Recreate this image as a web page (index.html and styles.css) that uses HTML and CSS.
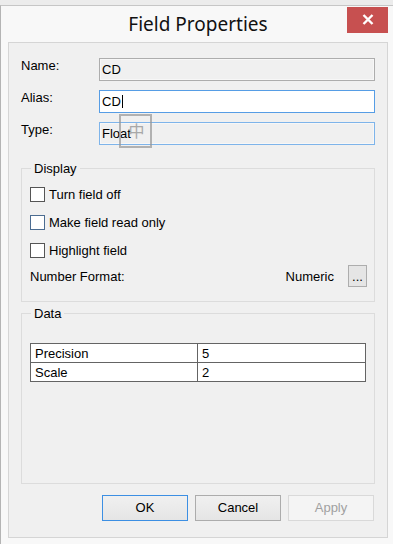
FILE: index.html
```html
<!DOCTYPE html>
<html>
<head>
<meta charset="utf-8">
	<title>Field Properties</title>
	<link rel="stylesheet" href="styles.css">
</head>
<body>
	<div class="window">
		<div class="titlebar">
			<span></span>
			<h1 class="title">Field Properties</h1>
			<div class="close">
				<svg width="12" height="11" viewBox="0 0 12 11"><path d="M1.5 1 L10.5 10 M10.5 1 L1.5 10" stroke="#fff" stroke-width="2.4" fill="none"/></svg>
			</div>
		</div>
		<div class="client">
			<div class="props">
				<span class="prop-label">Name:</span>
				<div class="box box-disabled">CD</div>
				<span class="prop-label">Alias:</span>
				<div class="box box-focus">CD<span class="caret"></span></div>
				<span class="prop-label">Type:</span>
				<div class="box box-hover">Float<span class="ime">中</span></div>
			</div>

			<fieldset class="group display">
				<legend>Display</legend>
				<div class="check"><span class="checkbox"></span>Turn field off</div>
				<div class="check"><span class="checkbox checkbox-hover"></span>Make field read only</div>
				<div class="check"><span class="checkbox"></span>Highlight field</div>
				<div class="format-row">
					<span class="format-label">Number Format:</span>
					<span class="format-value">Numeric</span>
					<span class="more">...</span>
				</div>
			</fieldset>

			<fieldset class="group data">
				<legend>Data</legend>
				<table class="grid">
					<tr><td class="col-name">Precision</td><td>5</td></tr>
					<tr><td class="col-name">Scale</td><td>2</td></tr>
				</table>
			</fieldset>

			<div class="buttons">
				<span class="btn btn-default">OK</span>
				<span class="btn">Cancel</span>
				<span class="btn btn-disabled">Apply</span>
			</div>
		</div>
	</div>
</body>
</html>
```

FILE: styles.css
```css
body{margin: 0;background-color: #ececec;font-family: "Liberation Sans", Arial, sans-serif;font-size: 13px;color: #000;overflow: hidden;}

.window{margin-top: 5px;height: 538px;border-top: 1px solid #c6c6c6;border-left: 1px solid #b4b4b4;background-color: #f8f8f8;}

/* title bar */
.titlebar{display: grid;grid-template-columns: 1fr auto 1fr;height: 36px;}
.title{margin: 0;font-family: "Noto Sans", "Open Sans", sans-serif;font-weight: normal;font-size: 19px;line-height: 36px;color: #111;padding-left: 2px;}
.close{justify-self: end;align-self: start;margin: 1px 5px 0 0;width: 41px;height: 26px;background-color: #c75050;display: flex;align-items: center;justify-content: center;}
.close svg{margin-top: -1px;}

/* client area */
.client{margin: 0 5px 0 7px;height: 496px;box-sizing: border-box;border: 1px solid #d5d5d5;background-color: #f0f0f0;padding: 15px 12px 0 12px;display: flex;flex-direction: column;}

.props{display: grid;grid-template-columns: 78px 1fr;row-gap: 9px;}
.prop-label{line-height: 15px;}
.box{position: relative;height: 23px;box-sizing: border-box;border: 1px solid #adadad;padding: 0 2px;line-height: 21px;background-color: #f0f0f0;}
.box-disabled{box-shadow: inset 0 0 0 1px #f7f7f7;}
.box-focus{border-color: #569de5;background-color: #fff;}
.box-hover{border-color: #7eb4ea;box-shadow: inset 0 0 0 1px #f7f7f7;}
.caret{display: inline-block;width: 1px;height: 13px;background-color: #000;vertical-align: -2px;margin-left: 1px;}
.ime{position: absolute;left: 19px;top: -9px;width: 33px;height: 34px;box-sizing: border-box;border: 2px solid rgba(150,150,150,0.7);color: #a8a8a8;font-family: "Noto Sans CJK SC", sans-serif;font-size: 16px;line-height: 28px;text-align: center;padding-left: 2px;}

/* group boxes */
.group{margin: 0;border: 1px solid #dcdcdc;padding: 0 7px 0 8px;min-width: 0;}
.group legend{margin-left: 1px;padding: 0 3px;line-height: 15px;}
.display{margin-top: 16px;padding-top: 11px;padding-bottom: 14px;}

.check{display: flex;align-items: center;height: 15px;margin-bottom: 13px;}
.checkbox{width: 15px;height: 15px;box-sizing: border-box;border: 1px solid #555;background-color: #fff;margin-right: 4px;}
.checkbox-hover{border-color: #4b6c91;}

.format-row{display: flex;align-items: center;height: 22px;margin-top: -6px;}
.format-label{flex: 1;}
.format-value{margin-right: 14px;}
.more{width: 19px;height: 22px;box-sizing: border-box;border: 1px solid #adadad;background-color: #e5e5e5;text-align: center;line-height: 22px;font-size: 13px;}

.data{margin-top: 4px;flex: 1;padding-top: 22px;max-height: 178px;}

.grid{width: 336px;border-collapse: collapse;background-color: #fff;}
.grid td{height: 18px;padding: 0 4px;line-height: 17px;border: 1px solid #646464;}
.grid .col-name{width: 158px;}

/* buttons */
.buttons{display: flex;justify-content: flex-end;gap: 7px;margin: 11px 1px 16px 0;}
.btn{width: 86px;height: 26px;box-sizing: border-box;border: 1px solid #acacac;background: linear-gradient(#f0f0f0, #e5e5e5);text-align: center;line-height: 24px;}
.btn-default{border-color: #3c8fe3;}
.btn-disabled{border-color: #d9d9d9;background: #f4f4f4;color: #a0a0a0;}
```
